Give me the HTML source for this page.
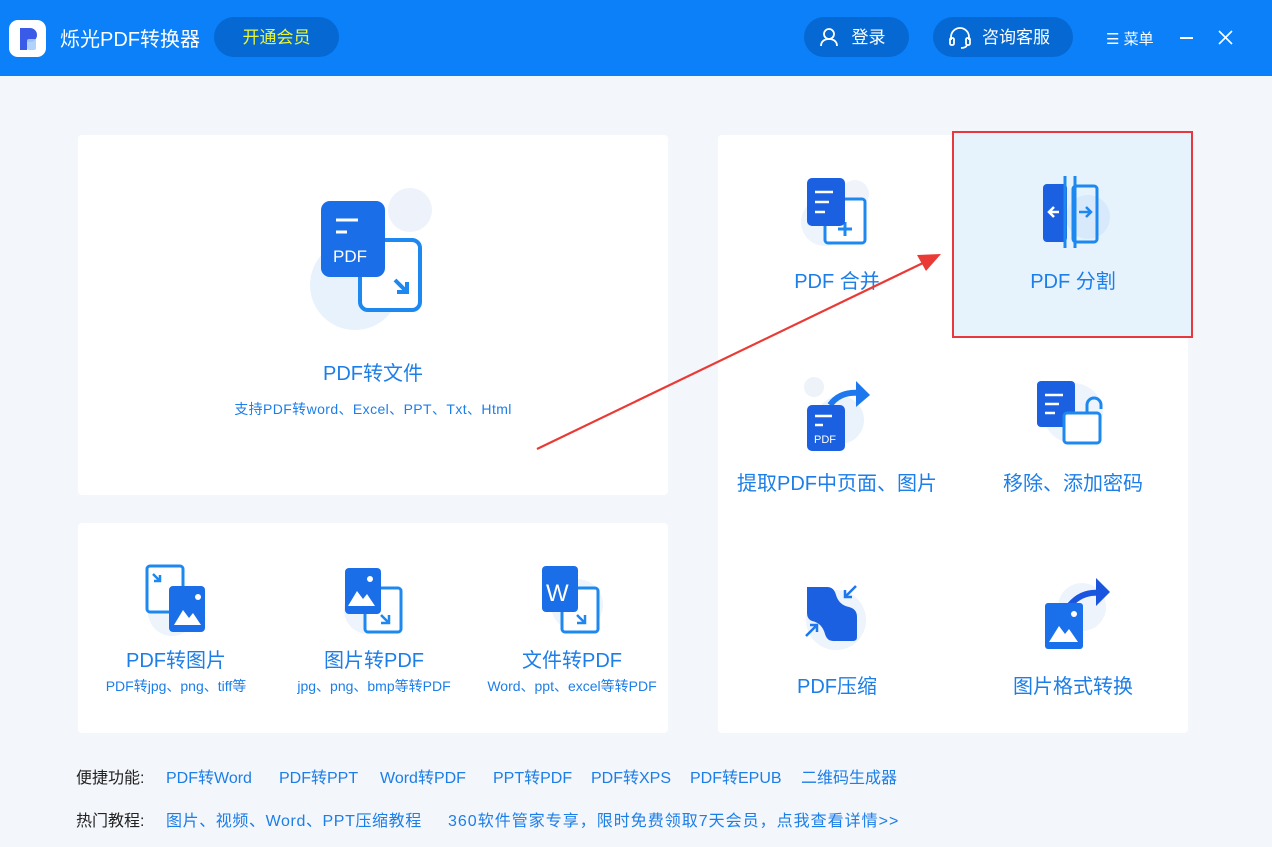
<!DOCTYPE html>
<html><head><meta charset="utf-8"><style>
*{margin:0;padding:0;box-sizing:border-box}
body{width:1272px;height:847px;background:#f3f6fa;font-family:"Liberation Sans","Noto Sans CJK SC",sans-serif;position:relative;overflow:hidden}
.a{position:absolute}
.hdr{left:0;top:0;width:1272px;height:76px;background:#0b80f8}
.pill{background:#0668d3;border-radius:20px;color:#fff;font-size:17px;text-align:center;line-height:40px;height:40px}
.card{background:#fff;border-radius:4px}
.t{color:#1c7ee8;text-align:center;white-space:nowrap}
.big{font-size:20px}
.sm{font-size:14px}
.lk{font-size:16px;color:#1c7ee8;white-space:nowrap}
</style></head><body>
<div class="a hdr"></div>
<div class="a" style="left:9px;top:20px;width:37px;height:37px;background:#fff;border-radius:9px"></div>
<svg class="a" style="left:9px;top:20px" width="37" height="37"><path d="M11 8h10a7 7 0 0 1 0 14h-3v8h-7z" fill="#3a5be8"/><rect x="18" y="19" width="9" height="11" rx="2" fill="#a9cdfb" opacity=".9"/></svg>
<div class="a" style="left:60px;top:23px;color:#fff;font-size:20px">烁光PDF转换器</div>
<div class="a pill" style="left:214px;top:17px;width:125px;color:#e9f53a;line-height:42px">开通会员</div>
<div class="a pill" style="left:804px;top:17px;width:105px;padding-left:24px;line-height:42px">登录</div>
<svg class="a" style="left:819px;top:27px" width="20" height="20" fill="none" stroke="#fff" stroke-width="1.8"><circle cx="10" cy="7" r="5"/><path d="M2 19c0-5 4-7 8-7s8 2 8 7"/></svg>
<div class="a pill" style="left:933px;top:17px;width:140px;padding-left:26px;line-height:42px">咨询客服</div>
<svg class="a" style="left:948px;top:27px" width="24" height="22" fill="none" stroke="#fff" stroke-width="1.8"><path d="M3 13v-3a9 9 0 0 1 18 0v3"/><rect x="2" y="11" width="4" height="7" rx="1.5"/><rect x="18" y="11" width="4" height="7" rx="1.5"/><path d="M19 18q-1 3-6 3"/></svg>
<div class="a" style="left:1106px;top:28px;color:#fff;font-size:15px">☰ 菜单</div>
<div class="a" style="left:1180px;top:37px;width:13px;height:1.5px;background:#fff"></div>
<svg class="a" style="left:1218px;top:30px" width="15" height="15" stroke="#fff" stroke-width="1.6"><path d="M1 1l13 13M14 1L1 14"/></svg>

<div class="a card" style="left:78px;top:135px;width:590px;height:360px"></div>
<div class="a card" style="left:78px;top:523px;width:590px;height:210px"></div>
<div class="a card" style="left:718px;top:135px;width:470px;height:598px"></div>
<div class="a" style="left:952px;top:131px;width:241px;height:207px;background:#e6f3fd;border:2px solid #e8383d"></div>

<svg class="a" style="left:300px;top:185px" width="145" height="150">
<circle cx="110" cy="25" r="22" fill="#eef3fb"/><circle cx="55" cy="100" r="45" fill="#e8f2fc"/>
<rect x="60" y="55" width="60" height="70" rx="8" fill="#fff" stroke="#1d88f0" stroke-width="4"/>
<path d="M95 95l12 12M107 97v10h-10" stroke="#1d88f0" stroke-width="4" fill="none"/>
<rect x="21" y="16" width="64" height="76" rx="9" fill="#1a6ee8"/>
<path d="M36 35h22M36 47h11" stroke="#fff" stroke-width="3"/>
<text x="33" y="77" fill="#fff" font-size="17" font-family="Liberation Sans">PDF</text></svg>
<div class="a t big" style="left:273px;top:357px;width:200px">PDF转文件</div>
<div class="a t sm" style="left:173px;top:399px;width:400px;letter-spacing:.4px">支持PDF转word、Excel、PPT、Txt、Html</div>

<svg class="a" style="left:140px;top:560px" width="75" height="80"><circle cx="32" cy="52" r="24" fill="#eef4fc"/><rect x="7" y="6" width="36" height="46" rx="3" fill="#fff" stroke="#1d88f0" stroke-width="3"/><path d="M13 14l7 7M20 15v6h-6" stroke="#1d88f0" stroke-width="2.5" fill="none"/><rect x="29" y="26" width="36" height="46" rx="4" fill="#1a6ee8"/><path d="M34 65l9-15 6 8 4-5 8 12z" fill="#fff"/><circle cx="58" cy="37" r="3" fill="#fff"/></svg>
<svg class="a" style="left:338px;top:560px" width="75" height="80"><circle cx="30" cy="50" r="24" fill="#eef4fc"/><rect x="27" y="28" width="36" height="44" rx="3" fill="#fff" stroke="#1d88f0" stroke-width="3"/><path d="M43 55l8 8M51 55v8h-8" stroke="#1d88f0" stroke-width="2.5" fill="none"/><rect x="7" y="8" width="36" height="46" rx="4" fill="#1a6ee8"/><path d="M10 46l9-15 6 8 4-5 8 12z" fill="#fff"/><circle cx="32" cy="19" r="3" fill="#fff"/></svg>
<svg class="a" style="left:537px;top:560px" width="75" height="80"><circle cx="40" cy="45" r="26" fill="#eef4fc"/><rect x="25" y="28" width="36" height="44" rx="3" fill="#fff" stroke="#1d88f0" stroke-width="3"/><path d="M40 55l8 8M48 55v8h-8" stroke="#1d88f0" stroke-width="2.5" fill="none"/><rect x="5" y="6" width="36" height="46" rx="4" fill="#1a6ee8"/><text x="9" y="41" fill="#fff" font-size="24" font-family="Liberation Sans">W</text></svg>
<div class="a t big" style="left:86px;top:644px;width:180px">PDF转图片</div>
<div class="a t sm" style="left:76px;top:676px;width:200px">PDF转jpg、png、tiff等</div>
<div class="a t big" style="left:284px;top:644px;width:180px">图片转PDF</div>
<div class="a t sm" style="left:264px;top:676px;width:220px">jpg、png、bmp等转PDF</div>
<div class="a t big" style="left:482px;top:644px;width:180px">文件转PDF</div>
<div class="a t sm" style="left:462px;top:676px;width:220px">Word、ppt、excel等转PDF</div>

<svg class="a" style="left:795px;top:172px" width="80" height="80"><circle cx="30" cy="50" r="24" fill="#eef4fc"/><circle cx="60" cy="22" r="14" fill="#f0f4fa"/><rect x="30" y="27" width="40" height="44" rx="3" fill="#fff" stroke="#1d88f0" stroke-width="3"/><path d="M50 50v14M43 57h14" stroke="#1d88f0" stroke-width="3"/><rect x="12" y="6" width="38" height="48" rx="5" fill="#1a60e0"/><path d="M20 20h18M20 30h14M20 40h10" stroke="#fff" stroke-width="2.5"/></svg>
<div class="a t big" style="left:747px;top:265px;width:180px">PDF 合并</div>
<svg class="a" style="left:1033px;top:172px" width="80" height="80"><circle cx="55" cy="45" r="22" fill="#d7e9fb"/><circle cx="25" cy="25" r="14" fill="#e0eefb"/><rect x="10" y="12" width="24" height="58" rx="4" fill="#1a60e0"/><rect x="40" y="14" width="24" height="56" rx="3" fill="none" stroke="#1d88f0" stroke-width="3"/><path d="M32 4v72M42 4v72" stroke="#1d88f0" stroke-width="3"/><path d="M26 40H16m5-5l-5 5 5 5" stroke="#fff" stroke-width="2.5" fill="none"/><path d="M46 40h12m-5-5l5 5-5 5" stroke="#1d88f0" stroke-width="2.5" fill="none"/></svg>
<div class="a t big" style="left:983px;top:265px;width:180px">PDF 分割</div>
<svg class="a" style="left:800px;top:375px" width="80" height="80"><circle cx="14" cy="12" r="10" fill="#eef2f9"/><circle cx="40" cy="45" r="24" fill="#eaf3fc"/><path d="M30 30q10-14 30-12" stroke="#1d78ee" stroke-width="6" fill="none"/><path d="M56 6l14 14-14 12z" fill="#1d78ee"/><rect x="7" y="30" width="38" height="46" rx="5" fill="#1a60e0"/><path d="M15 41h17M15 50h8" stroke="#fff" stroke-width="2.5"/><text x="14" y="68" fill="#fff" font-size="11" font-family="Liberation Sans">PDF</text></svg>
<div class="a t big" style="left:727px;top:467px;width:220px">提取PDF中页面、图片</div>
<svg class="a" style="left:1033px;top:375px" width="80" height="80"><circle cx="40" cy="38" r="30" fill="#eef4fc"/><rect x="4" y="6" width="38" height="46" rx="4" fill="#1a60e0"/><path d="M12 20h18M12 29h14M12 38h10" stroke="#fff" stroke-width="2.5"/><rect x="31" y="38" width="36" height="30" rx="3" fill="#fff" stroke="#1d88f0" stroke-width="3"/><path d="M54 38v-8a7 7 0 0 1 14 0v4" stroke="#1d88f0" stroke-width="3" fill="none"/></svg>
<div class="a t big" style="left:963px;top:467px;width:220px">移除、添加密码</div>
<svg class="a" style="left:800px;top:580px" width="80" height="80"><circle cx="36" cy="40" r="30" fill="#eef4fc"/><path d="M7 7h20q7 0 9 8 3 10 13 12 8 2 8 10v20q0 4-4 4H33q-6 0-8-7-3-11-13-13-5-2-5-8z" fill="#1a60e0"/><path d="M56 6l-11 11M45 10v7h7M6 56l11-11M17 52v-7h-7" stroke="#1d78ee" stroke-width="2.5" fill="none"/></svg>
<div class="a t big" style="left:747px;top:670px;width:180px">PDF压缩</div>
<svg class="a" style="left:1040px;top:575px" width="80" height="80"><circle cx="42" cy="32" r="24" fill="#eef4fc"/><path d="M30 30q12-14 30-12" stroke="#1a55e0" stroke-width="6" fill="none"/><path d="M56 3l14 14-14 14z" fill="#1a55e0"/><rect x="5" y="28" width="38" height="46" rx="3" fill="#1a70ea"/><path d="M9 67l10-16 6 8 4-5 9 13z" fill="#fff"/><circle cx="34" cy="39" r="3" fill="#fff"/></svg>
<div class="a t big" style="left:983px;top:670px;width:180px">图片格式转换</div>

<svg class="a" style="left:0;top:0" width="1272" height="847"><path d="M537 449L925 262" stroke="#ea3a36" stroke-width="2.2"/><path d="M941 254l-24 1 9 16z" fill="#ea3a36"/></svg>

<div class="a" style="left:76px;top:764px;font-size:16px;color:#222">便捷功能:</div>
<div class="a lk" style="left:166px;top:764px">PDF转Word</div>
<div class="a lk" style="left:279px;top:764px">PDF转PPT</div>
<div class="a lk" style="left:380px;top:764px">Word转PDF</div>
<div class="a lk" style="left:493px;top:764px">PPT转PDF</div>
<div class="a lk" style="left:591px;top:764px">PDF转XPS</div>
<div class="a lk" style="left:690px;top:764px">PDF转EPUB</div>
<div class="a lk" style="left:801px;top:764px">二维码生成器</div>
<div class="a" style="left:76px;top:807px;font-size:16px;color:#222">热门教程:</div>
<div class="a lk" style="left:166px;top:807px;letter-spacing:.6px">图片、视频、Word、PPT压缩教程</div>
<div class="a lk" style="left:448px;top:807px;letter-spacing:1px">360软件管家专享，限时免费领取7天会员，点我查看详情&gt;&gt;</div>
</body></html>
